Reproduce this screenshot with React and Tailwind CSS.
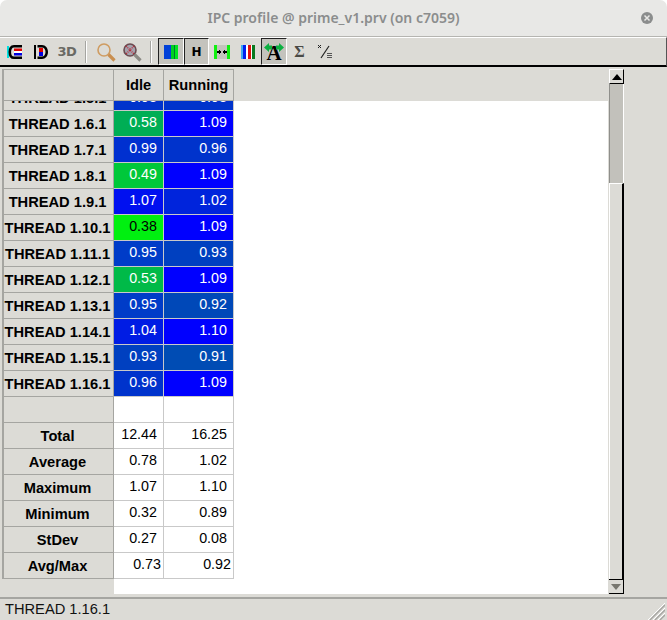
import React from 'react';

const threadRows = [
  { label: 'THREAD 1.6.1', idle: '0.58', idleBg: 'bg-[#00ae55]', run: '1.09', runBg: 'bg-[#0000ff]' },
  { label: 'THREAD 1.7.1', idle: '0.99', idleBg: 'bg-[#0030d0]', run: '0.96', runBg: 'bg-[#0033cc]' },
  { label: 'THREAD 1.8.1', idle: '0.49', idleBg: 'bg-[#00c83a]', run: '1.09', runBg: 'bg-[#0000ff]' },
  { label: 'THREAD 1.9.1', idle: '1.07', idleBg: 'bg-[#0010f0]', run: '1.02', runBg: 'bg-[#0024dc]' },
  { label: 'THREAD 1.10.1', idle: '0.38', idleBg: 'bg-[#00f010]', run: '1.09', runBg: 'bg-[#0000ff]', darkIdle: true },
  { label: 'THREAD 1.11.1', idle: '0.95', idleBg: 'bg-[#003cc8]', run: '0.93', runBg: 'bg-[#0040c0]' },
  { label: 'THREAD 1.12.1', idle: '0.53', idleBg: 'bg-[#00ba48]', run: '1.09', runBg: 'bg-[#0000ff]' },
  { label: 'THREAD 1.13.1', idle: '0.95', idleBg: 'bg-[#003cc8]', run: '0.92', runBg: 'bg-[#0048b8]' },
  { label: 'THREAD 1.14.1', idle: '1.04', idleBg: 'bg-[#001ce4]', run: '1.10', runBg: 'bg-[#0000ff]' },
  { label: 'THREAD 1.15.1', idle: '0.93', idleBg: 'bg-[#0040c0]', run: '0.91', runBg: 'bg-[#004cb4]' },
  { label: 'THREAD 1.16.1', idle: '0.96', idleBg: 'bg-[#0033cc]', run: '1.09', runBg: 'bg-[#0000ff]' },
];

const statRows = [
  { label: 'Total', idle: '12.44', run: '16.25' },
  { label: 'Average', idle: '0.78', run: '1.02' },
  { label: 'Maximum', idle: '1.07', run: '1.10' },
  { label: 'Minimum', idle: '0.32', run: '0.89' },
  { label: 'StDev', idle: '0.27', run: '0.08' },
  { label: 'Avg/Max', idle: '0.73', run: '0.92', tight: true },
];

const Pixels = ({ children }) => (
  <svg width="16" height="16" viewBox="0 0 16 16">{children}</svg>
);

const IconC = () => (
  <Pixels>
    <rect x="0" y="2" width="2" height="12" fill="#00e0e0" />
    <path d="M15 2.2H7C4 2.2 2.8 5 2.8 8s1.2 5.8 4.2 5.8h8" fill="none" stroke="#000" strokeWidth="2.6" />
    <rect x="7" y="4.5" width="8" height="2.5" fill="#e00000" />
    <rect x="7" y="7" width="8" height="2" fill="#fff" />
    <rect x="7" y="9" width="8" height="2.5" fill="#0000e0" />
  </Pixels>
);

const IconD = () => (
  <Pixels>
    <path d="M1 1h2v14h-2zM4.5 1H9c3.5 0 6 3 6 7s-2.500 7-6 7H4.500v-2.500H9c2 0 3.500-2 3.500-4.500S11 3.500 9 3.500H4.500z" fill="#000" />
    <rect x="6" y="4" width="4" height="4" fill="#e00000" />
    <rect x="6" y="8" width="4" height="4" fill="#0000e0" />
  </Pixels>
);

const IconLens = ({ tinted }) => (
  <svg width="20" height="20" viewBox="0 0 20 20">
    {tinted && <circle cx="8" cy="8" r="6" fill="#a3a3ad" />}
    <circle cx="8" cy="8" r="6" fill="none" stroke={tinted ? '#6a4a50' : '#cf9c62'} strokeWidth="1.6" />
    <path d="M12.500 12.500l6 6" stroke={tinted ? '#8b8b85' : '#c98f50'} strokeWidth="3.2" />
    {tinted && <path d="M4 4l8 8M12 4l-8 8" stroke="#c02030" strokeWidth="1.4" strokeDasharray="1 1" />}
  </svg>
);

const IconBars = () => (
  <svg width="16" height="16" viewBox="0 0 16 16" shapeRendering="crispEdges">
    <rect x="1" y="1" width="7" height="14" fill="#0040d8" />
    <rect x="8" y="1" width="3" height="14" fill="#00d020" />
    <rect x="11" y="1" width="1" height="14" fill="#007a30" />
    <rect x="12" y="1" width="3" height="14" fill="#00e820" />
  </svg>
);

const IconFit = () => (
  <svg width="16" height="16" viewBox="0 0 16 16" shapeRendering="crispEdges">
    <rect x="1" y="1" width="14" height="14" fill="#c4c3bd" />
    <rect x="0" y="1" width="3" height="14" fill="#10f010" />
    <rect x="13" y="1" width="3" height="14" fill="#10f010" />
    <path d="M3 7h2v-1h1v1h1v2h-1v1h-1v-1h-2zM13 7h-2v-1h-1v1h-1v2h1v1h1v-1h2z" fill="#000" />
  </svg>
);

const IconStripes = () => (
  <svg width="16" height="16" viewBox="0 0 16 16" shapeRendering="crispEdges">
    <rect x="1" y="1" width="2" height="14" fill="#40a8f0" />
    <rect x="3" y="1" width="3" height="14" fill="#0020f0" />
    <rect x="6" y="1" width="2" height="14" fill="#fff" />
    <rect x="8" y="1" width="3" height="14" fill="#e01010" />
    <rect x="11" y="1" width="1" height="14" fill="#fff" />
    <rect x="12" y="1" width="3" height="14" fill="#0a7a20" />
  </svg>
);

const IconFraction = () => (
  <svg width="18" height="18" viewBox="0 0 18 18" shapeRendering="crispEdges">
    <path d="M2 2h1v1h1v-1h1v1h-1v1h1v1h-1v-1h-1v1h-1v-1h1v-1h-1z" fill="#222" />
    <path d="M13 3l-8 12" stroke="#222" strokeWidth="1.2" shapeRendering="auto" />
    <path d="M11 10h5v1h-5zM11 12h5v1h-5zM11 14h5v1h-5z" fill="#555" />
  </svg>
);

const ToolButton = ({ pressed, className = '', children }) => (
  <div
    className={`h-[27px] flex items-center justify-center shrink-0 border ${className} ${
      pressed
        ? 'bg-[#c4c3bd] border-t-[#222] border-l-[#222] border-b-white border-r-white'
        : 'border-transparent'
    }`}
  >
    {children}
  </div>
);

const Separator = ({ className }) => <div className={`w-[2px] h-[22px] bg-white border-l border-[#a5a5a1] shrink-0 ${className}`} />;

const Toolbar = () => (
  <div className="h-[30px] flex items-center pl-[2px] bg-[#dcdbd6] border-t border-t-white border-r border-r-[#555] border-b-2 border-b-black shrink-0">
    <ToolButton className="w-[26px]"><IconC /></ToolButton>
    <ToolButton className="w-[26px]"><IconD /></ToolButton>
    <ToolButton className="w-[26px]">
      <span className="text-[13px] font-bold text-[#6a6a64] tracking-[-0.5px] font-['DejaVu_Sans']">3D</span>
    </ToolButton>
    <Separator className="ml-[5px] mr-[6px]" />
    <ToolButton className="w-[26px]"><IconLens /></ToolButton>
    <ToolButton className="w-[26px]"><IconLens tinted /></ToolButton>
    <Separator className="ml-[5px] mr-[6px]" />
    <ToolButton pressed className="w-[26px]"><IconBars /></ToolButton>
    <ToolButton pressed className="w-[25px]">
      <span className="text-[12px] font-black text-black font-['DejaVu_Sans']">H</span>
    </ToolButton>
    <ToolButton className="w-[26px]"><IconFit /></ToolButton>
    <ToolButton className="w-[26px]"><IconStripes /></ToolButton>
    <ToolButton pressed className="w-[26px] relative">
      <span className="text-[21px] leading-none mt-[3px] font-bold text-black font-['Liberation_Serif']">A</span>
      <svg className="absolute left-[2px] top-[4px]" width="20" height="9" viewBox="0 0 20 9">
        <path d="M0 4.500l5-4.500v2.500h3v4h-3v2.500zM20 4.500l-5-4.500v2.500h-3v4h3v2.500z" fill="#0bb040" />
      </svg>
    </ToolButton>
    <ToolButton className="w-[25px]">
      <span className="text-[16px] font-bold text-[#4a4a46] font-['Liberation_Serif']">Σ</span>
    </ToolButton>
    <ToolButton className="w-[26px]"><IconFraction /></ToolButton>
  </div>
);

const DataRow = ({ label, idle, idleBg = 'bg-white', run, runBg = 'bg-white', idleText = 'text-black', runText = 'text-black', pad = 'pr-[6px]', nudge = 'pb-[1px]', lineColor = 'border-[#c9c9c9]' }) => (
  <div className="flex shrink-0 h-[26px]">
    <div className="w-[112px] shrink-0 flex items-center justify-center pr-[2px] font-bold text-black bg-[#dcdbd6] border-r border-b border-[#a5a5a1] border-l-2 border-l-[#a5a5a1] whitespace-nowrap">
      {label}
    </div>
    <div className={`w-[50px] shrink-0 flex items-center justify-end text-[14.3px] border-r border-b ${nudge} ${lineColor} ${idleBg} ${idleText} ${pad}`}>{idle}</div>
    <div className={`w-[70px] shrink-0 flex items-center justify-end text-[14.3px] border-r border-b ${nudge} ${lineColor} ${runBg} ${runText} ${pad}`}>{run}</div>
  </div>
);

const ScrollArrow = ({ up }) => (
  <div className={`h-[15px] flex items-center justify-center bg-[#dcdbd6] shrink-0 ${up ? 'border-t border-l border-t-white border-l-white border-r border-b border-r-black border-b-black' : 'border-t border-t-black border-r border-r-black border-b border-b-black'}`}>
    <svg width="10" height="6" viewBox="0 0 10 6">
      {up ? <path d="M5 0l5 6h-10z" fill="#000" /> : <path d="M0 0h10l-5 6z" fill="#77766f" />}
    </svg>
  </div>
);

const Scrollbar = () => (
  <div className="w-[15px] flex flex-col ml-[1px] shrink-0">
    <ScrollArrow up />
    <div className="h-[99px] bg-[#c2c1bb] border-l border-r border-l-[#8f8f8b] border-r-white shrink-0" />
    <div className="flex-1 bg-[#dcdbd6] border-t border-t-white border-l border-l-white border-r-2 border-r-black" />
    <ScrollArrow />
  </div>
);

const ResizeGrip = () => (
  <svg width="20" height="20" viewBox="0 0 20 20">
    <path d="M3 20L20 3M8 20L20 8M13 20L20 13" stroke="#fff" strokeWidth="1" />
    <path d="M5 20L20 5M10 20L20 10M15 20L20 15" stroke="#a5a5a1" strokeWidth="1.4" />
  </svg>
);

export default function App() {
  return (
    <div className="w-[667px] h-[620px] flex flex-col overflow-hidden bg-white text-[14.67px] font-['Liberation_Sans',Arial,sans-serif]">
      {/* titlebar */}
      <div className="h-[37px] shrink-0 relative flex items-center justify-center pb-[1px] bg-[#e8e8e6] border-b border-[#b5b5b1] rounded-t-[7px]">
        <span className="text-[14px] font-semibold text-[#8b8d8d] font-['Noto_Sans',sans-serif]">IPC profile @ prime_v1.prv (on c7059)</span>
        <div className="absolute right-[14px] top-[12px] w-[12px] h-[12px] rounded-full bg-[#8b8d8d] flex items-center justify-center">
          <svg width="8" height="8" viewBox="0 0 8 8">
            <path d="M1.5 1.5l5 5M6.5 1.5l-5 5" stroke="#e8e8e6" strokeWidth="1.5" />
          </svg>
        </div>
      </div>

      <Toolbar />

      {/* table + scrollbar */}
      <div className="flex-1 min-h-0 flex bg-[#dcdbd6] pl-[2px] pt-[2px] pb-[3px]">
        <div className="w-[606px] flex flex-col bg-white overflow-hidden">
          <div className="relative z-10 h-[32px] flex shrink-0 bg-[#dcdbd6]">
            <div className="w-[112px] shrink-0 border-t border-b border-r border-[#a5a5a1] border-l-2 border-l-[#a5a5a1]" />
            <div className="w-[50px] shrink-0 flex items-center justify-center font-bold border-t border-r border-b border-[#a5a5a1]">Idle</div>
            <div className="w-[70px] shrink-0 flex items-center justify-center font-bold border-t border-r border-b border-[#a5a5a1]">Running</div>
          </div>
          {/* row scrolled mostly out of view: its top is under the header */}
          <div className="h-[10px] shrink-0 overflow-hidden flex flex-col justify-end">
            <DataRow label="THREAD 1.5.1" idle="0.93" idleBg="bg-[#0033cc]" idleText="text-white" run="0.93" runBg="bg-[#0033cc]" runText="text-white" nudge="pt-[1px]" />
          </div>
          {threadRows.map((row) => (
            <DataRow
              key={row.label}
              label={row.label}
              idle={row.idle}
              idleBg={row.idleBg}
              idleText={row.darkIdle ? 'text-black' : 'text-white'}
              run={row.run}
              runBg={row.runBg}
              runText="text-white"
            />
          ))}
          <DataRow label="" idle="" run="" />
          {statRows.map((row) => (
            <DataRow
              key={row.label}
              label={row.label}
              idle={row.idle}
              run={row.run}
              pad={row.tight ? 'pr-[2px]' : 'pr-[6px]'}
            />
          ))}
          <div className="flex-1 flex">
            <div className="w-[112px] bg-[#dcdbd6]" />
          </div>
        </div>
        <Scrollbar />
      </div>

      {/* status bar */}
      <div className="h-[23px] shrink-0 flex items-center justify-between pb-[1px] bg-[#dcdbd6] border-t-2 border-[#a5a5a1] pl-[5px] pr-[3px] relative">
        <span className="text-[#111]">THREAD 1.16.1</span>
        <div className="absolute right-[2px] bottom-0 h-[20px]"><ResizeGrip /></div>
      </div>
    </div>
  );
}
